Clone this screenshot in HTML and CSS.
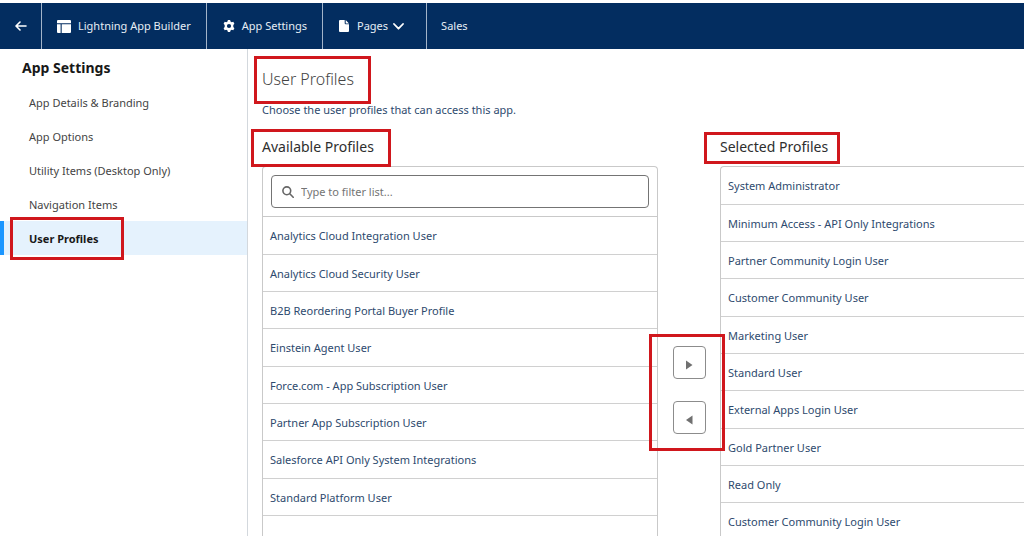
FILE: index.html
```html
<!DOCTYPE html>
<html lang="en">
<head>
<meta charset="utf-8">
<meta name="viewport" content="width=device-width, initial-scale=1">
<title>Lightning App Builder</title>
<link rel="stylesheet" href="styles.css">
</head>
<body>
<header class="topbar">
  <a class="topbar-item topbar-back" href="#" aria-label="Back">
    <svg width="12" height="10" viewBox="0 0 12 10" fill="none" stroke="currentColor" stroke-width="1.6" stroke-linecap="round" stroke-linejoin="round"><path d="M11 5H1.2M5 1L1 5l4 4"/></svg>
  </a>
  <a class="topbar-item topbar-builder" href="#">
    <svg width="14" height="13" viewBox="0 0 14 13" fill="currentColor"><path d="M1 0h12a1 1 0 0 1 1 1v2.200H0V1a1 1 0 0 1 1-1zM0 4.200h3.600V13H1a1 1 0 0 1-1-1zM4.700 4.200H14V12a1 1 0 0 1-1 1H4.700z"/></svg>
    <span>Lightning App Builder</span>
  </a>
  <a class="topbar-item topbar-settings" href="#">
    <svg width="12" height="12" viewBox="0 0 12 12" fill="currentColor" fill-rule="evenodd"><path d="M4.900 0h2.200l.4 1.600 1.200.7 1.600-.5 1.100 1.900L10.300 5v2l1.100 1.300-1.100 1.900-1.600-.5-1.200.7-.4 1.600H4.900l-.4-1.600-1.200-.7-1.600.5L.6 8.300 1.700 7V5L.6 3.700l1.100-1.900 1.600.5 1.200-.7zM6 3.900a2.100 2.100 0 1 0 0 4.200 2.100 2.100 0 0 0 0-4.200z"/></svg>
    <span>App Settings</span>
  </a>
  <button class="topbar-item topbar-pages" type="button">
    <svg width="10" height="12" viewBox="0 0 10 12" fill="currentColor"><path d="M1 0h4.700v3.300a1 1 0 0 0 1 1H10V11a1 1 0 0 1-1 1H1a1 1 0 0 1-1-1V1a1 1 0 0 1 1-1zM6.700 0L10 3.400H6.700z"/></svg>
    <span>Pages</span>
    <svg class="chevron" width="11" height="7" viewBox="0 0 11 7" fill="none" stroke="currentColor" stroke-width="1.800" stroke-linecap="round" stroke-linejoin="round"><path d="M1 1l4.500 4.700L10 1"/></svg>
  </button>
  <span class="topbar-item topbar-app">Sales</span>
</header>
<div class="layout">
  <nav class="sidebar" aria-labelledby="nav-title">
    <h2 class="sidebar-title" id="nav-title">App Settings</h2>
    <a class="nav-link" href="#">App Details &amp; Branding</a>
    <a class="nav-link" href="#">App Options</a>
    <a class="nav-link" href="#">Utility Items (Desktop Only)</a>
    <a class="nav-link" href="#">Navigation Items</a>
    <a class="nav-link nav-active" href="#" aria-current="page">User Profiles<span class="mark mark-nav"></span></a>
  </nav>
  <main class="content">
    <h1 class="page-title">User Profiles<span class="mark mark-title"></span></h1>
    <p class="intro">Choose the user profiles that can access this app.</p>
    <div class="dueling">
      <section class="column">
        <h2 class="list-title">Available Profiles<span class="mark mark-available"></span></h2>
        <div class="list list-available">
          <div class="filter">
            <label class="search">
              <svg width="12" height="12" viewBox="0 0 12 12" fill="none" stroke="currentColor" stroke-width="1.600" stroke-linecap="round"><circle cx="4.800" cy="4.800" r="3.900"/><path d="M7.800 7.800L11.200 11.200"/></svg>
              <input class="search-input" type="text" placeholder="Type to filter list..." aria-label="Filter available profiles">
            </label>
          </div>
          <ul class="rows">
            <li>Analytics Cloud Integration User</li>
            <li>Analytics Cloud Security User</li>
            <li>B2B Reordering Portal Buyer Profile</li>
            <li>Einstein Agent User</li>
            <li>Force.com - App Subscription User</li>
            <li>Partner App Subscription User</li>
            <li>Salesforce API Only System Integrations</li>
            <li>Standard Platform User</li>
          </ul>
        </div>
      </section>
      <div class="movers">
        <div class="mover-group">
          <button class="mover" type="button" aria-label="Move to selected"><svg width="7" height="10" viewBox="0 0 7 10" fill="currentColor"><path d="M0 0.500L6.500 5 0 9.500z"/></svg></button>
          <button class="mover" type="button" aria-label="Move to available"><svg width="7" height="10" viewBox="0 0 7 10" fill="currentColor"><path d="M6.500 0.500L0 5l6.500 4.500z"/></svg></button>
          <span class="mark mark-movers"></span>
        </div>
      </div>
      <section class="column">
        <h2 class="list-title">Selected Profiles<span class="mark mark-selected"></span></h2>
        <div class="list list-selected">
          <ul class="rows">
            <li>System Administrator</li>
            <li>Minimum Access - API Only Integrations</li>
            <li>Partner Community Login User</li>
            <li>Customer Community User</li>
            <li>Marketing User</li>
            <li>Standard User</li>
            <li>External Apps Login User</li>
            <li>Gold Partner User</li>
            <li>Read Only</li>
            <li>Customer Community Login User</li>
          </ul>
        </div>
      </section>
    </div>
  </main>
</div>
</body>
</html>
```
FILE: styles.css
```css
* { box-sizing: border-box; }
body {
  margin: 0;
  height: 100vh;
  overflow: hidden;
  display: flex;
  flex-direction: column;
  background: #fff;
  color: #2e4a6e;
  font: 11px/16px "Noto Sans", "Open Sans", sans-serif;
}
svg { flex: none; display: block; }
h1, h2, p, ul { margin: 0; padding: 0; font-weight: 400; }

.topbar {
  flex: none;
  display: flex;
  height: 49px;
  border-top: 3px solid #fff;
  background: #032d60;
  color: #fff;
}
.topbar-item {
  display: flex;
  align-items: center;
  gap: 7px;
  padding: 0 14px;
  border: 0;
  border-right: 1px solid #a3b4c9;
  background: none;
  color: #e6edf5;
  font: inherit;
  text-decoration: none;
  white-space: nowrap;
}
.topbar-item svg { color: #fff; }
.topbar-back { padding: 0 14px 0 15px; }
.topbar-builder { padding: 0 15px; }
.topbar-settings { padding: 0 15px 0 16px; }
.topbar-pages { padding: 0 22px 0 16px; gap: 8px; }
.chevron { margin-left: -3px; }
.topbar-app { border-right: 0; }

.layout { flex: 1; display: flex; min-height: 0; }
.sidebar {
  flex: none;
  width: 248px;
  border-right: 1px solid #d3d8dd;
}
.sidebar-title {
  padding: 10px 22px 8px;
  color: #181818;
  font-size: 14px;
  line-height: 18px;
  font-weight: 700;
}
.nav-link {
  position: relative;
  display: block;
  padding: 10px 0 8px 29px;
  color: #444;
  text-decoration: none;
}
.nav-active {
  background: #e5f2fd;
  box-shadow: inset 4px 0 #1b96ff;
  color: #181818;
  font-weight: 700;
}

.content {
  flex: 1;
  min-width: 0;
  display: flex;
  flex-direction: column;
  padding: 18px 0 0 14px;
}
.page-title {
  position: relative;
  color: #444;
  font-size: 16px;
  line-height: 24px;
  font-weight: 300;
}
.intro { padding-top: 11px; }
.dueling {
  flex: 1;
  display: grid;
  grid-template-columns: 396fr 62px 304fr;
  padding-top: 20px;
}
.column { display: flex; flex-direction: column; min-width: 0; }
.list-title {
  position: relative;
  padding-bottom: 10px;
  color: #2e2e2e;
  font-size: 14px;
  line-height: 18px;
}
.list { flex: 1; border: 1px solid #c9c9c9; border-bottom: 0; }
.list-available { border-radius: 4px 4px 0 0; }
.list-selected { border-right: 0; border-radius: 4px 0 0 0; }
.filter { padding: 8px; border-bottom: 1px solid #c9c9c9; }
.search {
  display: flex;
  align-items: center;
  gap: 7px;
  height: 33px;
  padding: 0 10px;
  border: 1px solid #747474;
  border-radius: 4px;
  color: #666;
}
.search-input {
  flex: 1;
  min-width: 0;
  padding: 0;
  border: 0;
  outline: 0;
  background: none;
  color: #444;
  font: inherit;
}
.search-input::placeholder { color: #747474; opacity: 1; }
.rows { list-style: none; }
.rows li {
  height: 37px;
  padding: 11px 7px 0;
  border-bottom: 1px solid #d0d0d0;
  white-space: nowrap;
}
.rows li:nth-child(3n + 1) { height: 38px; }

.movers { display: flex; justify-content: center; align-items: flex-start; padding-top: 208px; }
.mover-group { position: relative; display: grid; gap: 22px; }
.mover {
  display: grid;
  place-items: center;
  width: 33px;
  height: 33px;
  padding: 5px 0 0;
  border: 1px solid #8c8c8c;
  border-radius: 4px;
  background: #fff;
  color: #707070;
}

/* Highlight frames drawn over the page */
.mark { position: absolute; border: 3px solid #d0171d; pointer-events: none; }
.mark-nav { left: 10px; top: -4px; width: 114px; height: 43px; }
.mark-title { left: -8px; top: -11px; width: 117px; height: 48px; }
.mark-available { left: -11px; top: -9px; width: 140px; height: 38px; }
.mark-selected { left: -16px; top: -6px; width: 136px; height: 32px; }
.mark-movers { left: -24px; top: -12px; width: 76px; height: 117px; }
```
